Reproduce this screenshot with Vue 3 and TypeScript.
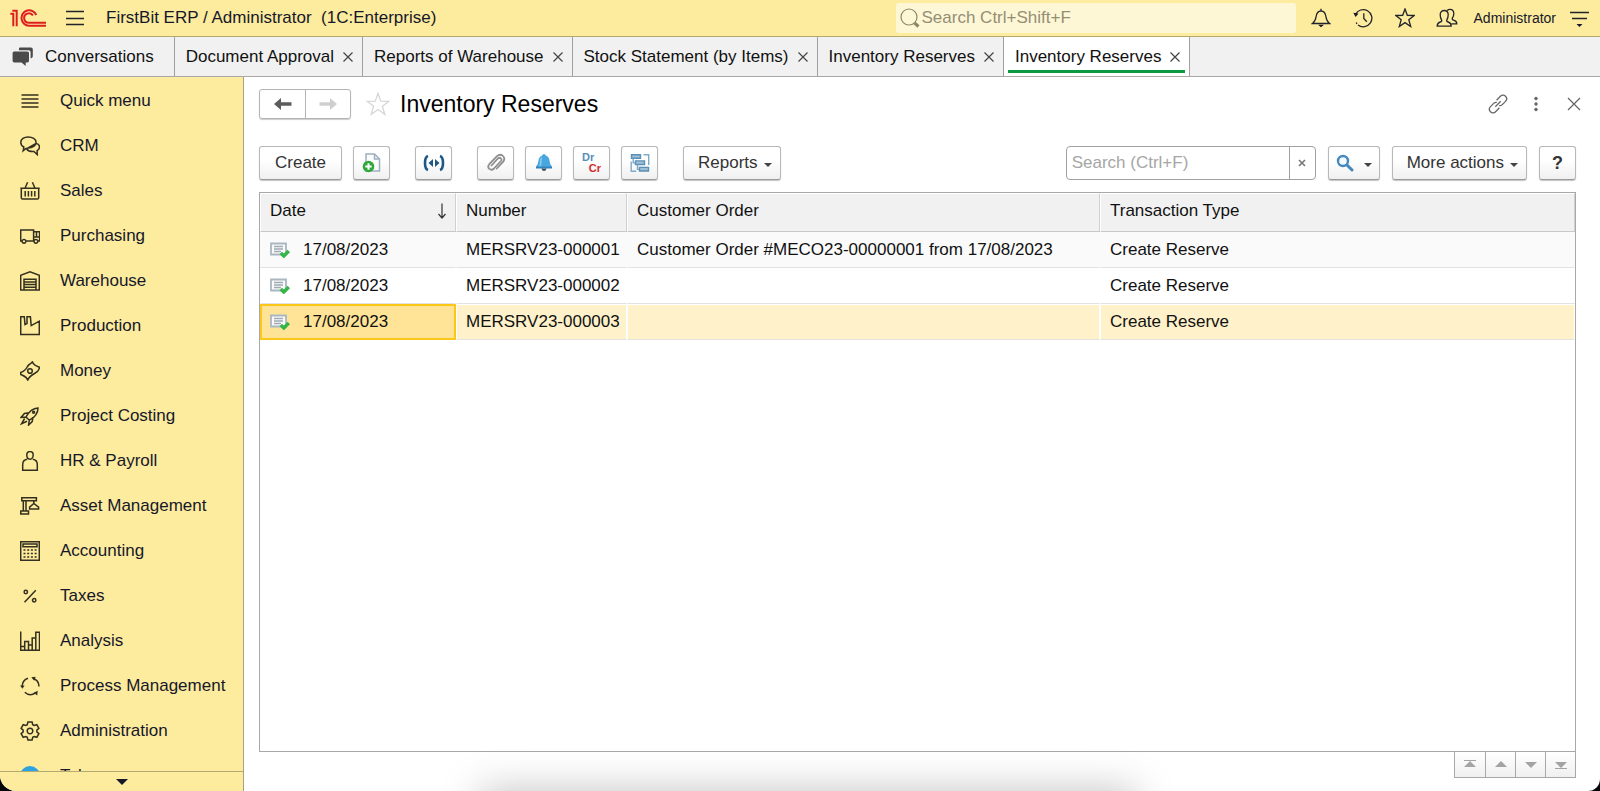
<script setup lang="ts">
import { ref } from 'vue'

interface Section {
  label: string
  stroke: string
  fill?: string
  badge?: boolean
}

interface Reserve {
  date: string
  number: string
  order: string
  type: string
}

const circle = (x: number, y: number, r: number): string =>
  `M${x - r} ${y}a${r} ${r} 0 1 0 ${2 * r} 0a${r} ${r} 0 1 0 ${-2 * r} 0z`

const polar = (r: number, deg: number): string => {
  const a = (deg * Math.PI) / 180
  return `${(10 + r * Math.cos(a)).toFixed(2)} ${(10 + r * Math.sin(a)).toFixed(2)}`
}

const gear = (): string => {
  const points: string[] = []
  for (let k = 0; k < 6; k++) {
    const a = 60 * k - 90
    points.push(polar(6.9, a - 23), polar(9.3, a - 13), polar(9.3, a + 13), polar(6.9, a + 23))
  }
  return `M${points.join('L')}z`
}

const sections: Section[] = [
  { label: 'Quick menu', stroke: 'M1.5 4h17M1.5 8h17M1.5 12h17M1.5 16h17' },
  {
    label: 'CRM',
    stroke:
      'M3.2 14.600l.6-3.600C1.600 9.800.8 8.200.8 6.400.8 3.200 4 .9 8.200.9s7.900 2.400 7.900 5.500-3.600 5.700-7.900 5.700c-1.800.2-3.400 1-5 2.500zM16.200 7.400c2.200.6 3.300 1.900 3.300 3.500 0 1.500-.9 2.900-2.400 3.700l.2 4-3.400-3.100c-3.200.3-6-.8-7.400-2.800M16.100 7.400l-8 4.600',
  },
  {
    label: 'Sales',
    stroke:
      'M.3 7.300h19.400M1.300 7.300v9.400q0 1.300 1.300 1.300h14.800q1.300 0 1.300-1.300V7.300M5 7.300L7.600 1.300M15 7.300L12.400 1.300M5.200 10v5.600M8.400 10v5.600M11.600 10v5.600M14.800 10v5.600',
  },
  {
    label: 'Purchasing',
    stroke: 'M2 15H.7V4h12.900v11H6M13.600 5.800h6V15h-1.600M13.600 11h6M16.500 6v5' + circle(4, 15.3, 1.9) + circle(15.9, 15.3, 1.9),
  },
  {
    label: 'Warehouse',
    stroke: 'M.7 19V4.200L10 .9l9.300 3.300V19zM4 19V8.200h12V19M4 10.900h12M4 13.600h12M4 16.300h12',
  },
  { label: 'Production', stroke: 'M.7 18.500V.8h3.600l.7 7.800 2-1V.8h3.400l.8 8.800 8.100-4.400v13.300z' },
  {
    label: 'Money',
    stroke:
      'M.6 11.500C4 10.500 6 8.500 7.500 5.500 9 3 11 3 12.300.8 13.500 4 16.500 5.400 19.400 6.200 19.600 9 17 11 14.500 12.500 11 14.500 9 16 7.800 19 6.500 15.500 3.800 15 .8 13.500z' +
      circle(10, 10, 2.3),
  },
  {
    label: 'Project Costing',
    stroke:
      'M18 2C13 2.300 9.500 4.500 6 11l3.300 3.200C15.500 11 18 7.500 18 2zM9 6.800l-4.600.6L1 11.500 6 11M13 11.200l-.8 4.400L8.600 19l.7-4.800M4.600 12.500L1.500 17.800 7 15.200' +
      circle(13.6, 6.2, 1),
  },
  {
    label: 'HR & Payroll',
    stroke:
      'M10 .6c2 0 3.200 1.500 3.200 3.500S12 8.200 10 8.200 6.800 6.200 6.800 4.100 8 .6 10 .6zM7.200 8.200C4.200 8.600 2.700 10.600 2.700 13.500v5.800h14.600v-5.800c0-2.900-1.500-4.900-4.500-5.300',
  },
  {
    label: 'Asset Management',
    stroke:
      'M.8 14.900h7.700v3.200H.8zM3.300 14.900V5M6 14.900V5M1.800 1.800h14.600v3H1.800zM13.800 4.800V7.500M13.800 7.500l-4.200 3.700v1.800h9v-1.800z',
  },
  {
    label: 'Accounting',
    stroke:
      'M.7.7h18.600v18.600H.7zM3 3h14v2.800H3zM3.500 9h2M7.200 9h2M10.900 9h2M14.600 9h2M3.500 12.500h2M7.200 12.500h2M10.900 12.500h2M14.600 12.500h2M3.500 16h2M7.200 16h2M10.900 16h2M14.600 16h2',
  },
  { label: 'Taxes', stroke: 'M15.800 4.200L4.500 16.200' + circle(5.8, 6, 1.7) + circle(14.2, 14.200, 1.7) },
  {
    label: 'Analysis',
    stroke: 'M.7.4v18.900h18.800V1.300h-3.700v18M12.200 19V7h3.600M8.500 19v-5h3.700M4.700 19v-8.600h3.800V14M.7 15.500h4',
  },
  {
    label: 'Process Management',
    stroke: 'M2.200 10.500C2.300 6.500 4.400 3.400 8 2.300M13 2.300c3.700 1.300 5.900 4.300 6 8.200M15.500 16.800C12 19.300 8 19.200 4.800 16.200',
    fill: 'M0 9.500h4.600l-2.100 3.300zM11.300 1.300l4.300-.6-1.300 4zM17.800 14.800l-.6 4.700-3.500-2.700z',
  },
  { label: 'Administration', stroke: gear() + circle(10, 10, 2.8) },
  { label: 'Telegram', stroke: '', badge: true },
]

const tabs = [
  'Document Approval',
  'Reports of Warehouse',
  'Stock Statement (by Items)',
  'Inventory Reserves',
  'Inventory Reserves',
]
const activeTab = ref(4)

const rows: Reserve[] = [
  {
    date: '17/08/2023',
    number: 'MERSRV23-000001',
    order: 'Customer Order #MECO23-00000001 from 17/08/2023',
    type: 'Create Reserve',
  },
  { date: '17/08/2023', number: 'MERSRV23-000002', order: '', type: 'Create Reserve' },
  { date: '17/08/2023', number: 'MERSRV23-000003', order: '', type: 'Create Reserve' },
]
const selected = ref(2)

const pager = [
  { label: 'First', d: 'M1 0h12v1H1zM7 1l6 6H1z' },
  { label: 'Previous', d: 'M7 1l6 6H1z' },
  { label: 'Next', d: 'M1 2h12L7 8z' },
  { label: 'Last', d: 'M1 2h12L7 8zM1 8h12v1H1z' },
]

const globalSearch = ref('')
const listSearch = ref('')
</script>

<template>
  <div class="app">
    <header class="topbar">
      <svg class="logo" viewBox="0 0 36 18" aria-label="1C">
        <path d="M.3 4.800H3.300V17.300M2.300 1.700H6.700V17.300M26.300 6A7.700 7.700 0 1 0 19 16.700H36M22.900 6.600A4.700 4.700 0 1 0 19 13.700H36" />
      </svg>
      <button class="icon-btn burger" aria-label="Main menu">
        <svg width="18" height="16" viewBox="0 0 18 16"><path d="M0 1.500h18M0 8.500h18M0 14.500h18" /></svg>
      </button>
      <span class="app-title">FirstBit ERP / Administrator&nbsp; (1C:Enterprise)</span>
      <label class="global-search">
        <svg width="20" height="20" viewBox="0 0 20 20">
          <circle cx="9" cy="9" r="8" />
          <path class="handle" d="M14.500 15l4 3.500" />
        </svg>
        <input v-model="globalSearch" type="text" placeholder="Search Ctrl+Shift+F" aria-label="Global search" />
      </label>
      <div class="tools">
        <button class="icon-btn" aria-label="Notifications">
          <svg width="20" height="20" viewBox="0 0 20 20">
            <path d="M1.500 15.500h17c-2.500-2-3.200-3.800-3.600-7C14.400 5.200 13 3 10 3S5.600 5.200 5.100 8.500c-.4 3.200-1.100 5-3.600 7zM10 3V.8" />
            <path class="solid" d="M7 16.800h6L10 19.300z" />
          </svg>
        </button>
        <button class="icon-btn" aria-label="History">
          <svg width="20" height="20" viewBox="0 0 20 20">
            <path d="M2.500 6.500A8.600 8.600 0 1 1 5 17M3.200 14.500l.8 1.400M10.800 5.200v5.300l3 3.200" />
            <path class="solid" d="M.3 4.800l5.200.6-2.900 3.600z" />
          </svg>
        </button>
        <button class="icon-btn" aria-label="Favorites">
          <svg width="20" height="20" viewBox="0 0 20 20">
            <path d="M10 1l2.300 6.300 6.900.2-5.400 4.200 1.900 6.800L10 14.600l-5.700 3.900 1.900-6.800L.8 7.500l6.900-.2z" />
          </svg>
        </button>
        <button class="icon-btn" aria-label="Users">
          <svg width="22" height="20" viewBox="0 0 22 20">
            <path d="M1.200 18.200c0-2.400.8-3.600 3-4.200 1.500-.4 1.900-1 1.300-2.200C4.600 10.300 4.200 8.600 4.200 6.800c0-2.600 1.500-4.300 4-4.300s4 1.700 4 4.300c0 1.800-.4 3.500-1.300 5-.6 1.200-.2 1.800 1.300 2.200 2.200.6 3 1.800 3 4.200z" />
            <path d="M11.200 2.500c.7-.8 1.600-1.200 2.800-1.200 2.500 0 3.800 1.700 3.800 4.200 0 1.700-.5 3.200-1.300 4.400-.6 1.200-.2 1.800 1.200 2.300 2.200.7 3.100 1.800 3.100 3.600h-5.500" />
          </svg>
        </button>
      </div>
      <span class="user">Administrator</span>
      <button class="icon-btn service" aria-label="Service menu">
        <svg width="20" height="20" viewBox="0 0 20 20">
          <path d="M0 4.500h19M2 10.500h15" />
          <path class="solid" d="M6.500 16h6L9.500 19z" />
        </svg>
      </button>
    </header>

    <nav class="tabs" aria-label="Open windows">
      <button class="tab home">
        <svg width="22" height="20" viewBox="0 0 22 20">
          <path d="M7 3.200V1.200Q7 .5 8 .5h11q1.800 0 1.800 1.700v7q0 1.700-1.600 2l-.6.100v-6q0-2-2-2.100z" />
          <path d="M2.200 4.500h13.200q1.600 0 1.600 1.600v7.700q0 1.600-1.600 1.600h-1.700v3.500L9.500 15.400H2.200q-1.600 0-1.600-1.600V6.100q0-1.600 1.600-1.600z" />
        </svg>
        Conversations
      </button>
      <div v-for="(t, i) in tabs" :key="i" class="tab" :class="{ active: i === activeTab }">
        <button class="tab-label" @click="activeTab = i">{{ t }}</button>
        <button class="tab-close" aria-label="Close tab">
          <svg width="10" height="10" viewBox="0 0 10 10"><path d="M.5.500l9 9M9.500.500l-9 9" /></svg>
        </button>
      </div>
    </nav>

    <div class="body">
      <aside class="sidebar">
        <nav class="sections" aria-label="Sections">
          <a v-for="s in sections" :key="s.label" href="#" class="section">
            <svg width="20" height="20" viewBox="0 0 20 20">
              <circle v-if="s.badge" class="badge" cx="10" cy="10" r="10" />
              <path v-else :d="s.stroke" />
              <path v-if="s.fill" class="solid" :d="s.fill" />
            </svg>
            {{ s.label }}
          </a>
        </nav>
        <button class="more" aria-label="Scroll sections">
          <svg width="12" height="6" viewBox="0 0 12 6"><path d="M0 0h12L6 6z" /></svg>
        </button>
      </aside>

      <main class="main">
        <div class="title-row">
          <div class="history">
            <button aria-label="Back">
              <svg width="18" height="12" viewBox="0 0 18 12"><path d="M0 6l7-6v4.200h10.500v3.600H7V12z" /></svg>
            </button>
            <button class="off" aria-label="Forward" disabled>
              <svg width="18" height="12" viewBox="0 0 18 12"><path d="M18 6l-7-6v4.200H.5v3.600H11V12z" /></svg>
            </button>
          </div>
          <button class="icon-btn fav" aria-label="Add to favorites">
            <svg width="24" height="24" viewBox="0 0 24 24">
              <path d="M12 1.200l2.700 7.900 8.300.2-6.600 5 2.400 8L12 17.500l-6.800 4.800 2.400-8L1 9.300l8.300-.2z" />
            </svg>
          </button>
          <h1>Inventory Reserves</h1>
          <div class="window-tools">
            <button class="icon-btn" aria-label="Get link">
              <svg width="20" height="20" viewBox="0 0 20 20">
                <path d="M8.600 6.200l3.800-3.900c1.500-1.500 3.700-1.500 5.100-.1s1.400 3.700 0 5.200l-3.200 3.200c-.9.900-2 1.200-3.100 1M11.400 13.800l-3.800 3.900c-1.500 1.500-3.700 1.500-5.100.1s-1.400-3.700 0-5.200l3.200-3.200c.9-.9 2-1.200 3.100-1M7.300 12.700l5.400-5.400" />
              </svg>
            </button>
            <button class="icon-btn" aria-label="Window options">
              <svg width="20" height="20" viewBox="0 0 20 20">
                <circle class="dot" cx="10" cy="4.500" r="1.700" />
                <circle class="dot" cx="10" cy="10" r="1.700" />
                <circle class="dot" cx="10" cy="15.500" r="1.700" />
              </svg>
            </button>
            <button class="icon-btn" aria-label="Close">
              <svg width="14" height="14" viewBox="0 0 14 14"><path d="M1 1l12 12M13 1L1 13" /></svg>
            </button>
          </div>
        </div>

        <div class="toolbar">
          <button class="btn create">Create</button>
          <button class="btn square" aria-label="Create by copying">
            <svg width="20" height="20" viewBox="0 0 20 20">
              <path d="M4 1h8.500L17.500 6v12H4z" fill="#fbfcfd" stroke="#9fb0bf" stroke-width="1.500" />
              <path d="M12.500 1v5h5" fill="none" stroke="#9fb0bf" stroke-width="1.500" />
              <circle cx="6.500" cy="13.500" r="5.800" fill="#2fa83a" />
              <path d="M6.500 10.300v6.400M3.300 13.500h6.400" stroke="#fff" stroke-width="2" />
            </svg>
          </button>
          <button class="btn square apart" aria-label="Set date interval">
            <svg width="22" height="18" viewBox="0 0 22 18">
              <path d="M5 2Q2 3 2 9T5 16M17 2q3 1 3 7T17 16" fill="none" stroke="#1d5785" stroke-width="2.600" />
              <path d="M10 5v8L5.500 9zM12 5v8l4.500-4z" fill="#1d5785" />
            </svg>
          </button>
          <button class="btn square apart" aria-label="Attached files">
            <svg width="20" height="20" viewBox="0 0 20 20">
              <path d="M5.500 12.500l6.500-7q1.500-1.400 2.800-.2t.1 2.700L8 15.500q-2.300 2.300-4.600.4t-.1-4.700L11 3.200q3-2.700 5.800-.3t.4 5.700l-6.400 6.900" fill="none" stroke="#8f8f8f" stroke-width="1.800" stroke-linecap="round" />
            </svg>
          </button>
          <button class="btn square" aria-label="Reminders">
            <svg width="18" height="20" viewBox="0 0 18 20">
              <path d="M9 1q1.600 0 1.700 1.500 3.600 1 3.900 5.500.2 3.700 2.400 5.700v1.600H1v-1.600q2.200-2 2.400-5.700.3-4.500 3.900-5.500Q7.400 1 9 1z" fill="#49a7e0" />
              <path d="M7 3.500q-2 1.500-2 5t-1.500 5H6q1-5 1-10z" fill="#86c9f0" />
              <path d="M1 13.600h16v1.800H1z" fill="#3482b8" />
              <path d="M6.500 15.400h5q-.4 2.600-2.500 2.600t-2.500-2.600z" fill="#47515a" />
            </svg>
          </button>
          <button class="btn square drcr" aria-label="Accounting entries"><span class="dr">Dr</span><span class="cr">Cr</span></button>
          <button class="btn square" aria-label="Related documents">
            <svg width="20" height="20" viewBox="0 0 20 20">
              <g fill="#9fc0d8" stroke="#5a8fb6" stroke-width="1.400">
                <path d="M1.500 1.700h9v3.600h-9zM5.500 7.900h9v3.600h-9zM9.500 14.400h9v3.600h-9z" />
              </g>
              <path d="M3.200 5.500v4.200h2.300M7.500 11.700v4.700H9M13.500 1.700h5.200V12M1.200 8.500v9.700h5" fill="none" stroke="#7fa9c8" stroke-width="1.400" />
            </svg>
          </button>
          <button class="btn menu apart">Reports<i class="caret"></i></button>

          <div class="right">
            <div class="list-search">
              <input v-model="listSearch" type="text" placeholder="Search (Ctrl+F)" aria-label="Search in list" />
              <button aria-label="Clear search" @click="listSearch = ''">
                <svg width="8" height="8" viewBox="0 0 8 8"><path d="M1 1l6 6M7 1L1 7" /></svg>
              </button>
            </div>
            <button class="btn find" aria-label="Find">
              <svg width="18" height="18" viewBox="0 0 18 18">
                <circle cx="7" cy="7" r="5" fill="#f4f9fd" stroke="#4688bd" stroke-width="2.400" />
                <path d="M11 11l5 5" stroke="#4688bd" stroke-width="3" stroke-linecap="round" />
              </svg>
              <i class="caret"></i>
            </button>
            <button class="btn menu">More actions<i class="caret"></i></button>
            <button class="btn square help">?</button>
          </div>
        </div>

        <div class="grid">
          <table>
            <colgroup>
              <col class="c-date" />
              <col class="c-number" />
              <col class="c-order" />
              <col />
            </colgroup>
            <thead>
              <tr>
                <th scope="col">
                  <span class="sortable">
                    Date
                    <svg width="10" height="16" viewBox="0 0 10 16"><path d="M5 .500v14M1.500 11L5 15l3.500-4" /></svg>
                  </span>
                </th>
                <th scope="col">Number</th>
                <th scope="col">Customer Order</th>
                <th scope="col">Transaction Type</th>
              </tr>
            </thead>
            <tbody>
              <tr v-for="(r, i) in rows" :key="r.number" :class="{ selected: i === selected }" @click="selected = i">
                <td>
                  <span class="date">
                    <svg width="20" height="16" viewBox="0 0 20 16">
                      <path d="M1 1.500h15v11H1z" fill="#f8fafb" stroke="#a9b7c2" stroke-width="1.800" />
                      <path d="M4 4.500h9M4 7h9M4 9.500h7" stroke="#a0abb4" stroke-width="1.300" />
                      <path d="M10.800 11l3 3L18.800 9" fill="none" stroke="#36b548" stroke-width="3.400" />
                    </svg>
                    {{ r.date }}
                  </span>
                </td>
                <td>{{ r.number }}</td>
                <td>{{ r.order }}</td>
                <td>{{ r.type }}</td>
              </tr>
            </tbody>
          </table>
        </div>

        <div class="pager">
          <button v-for="p in pager" :key="p.label" :aria-label="p.label">
            <svg width="14" height="10" viewBox="0 0 14 10"><path :d="p.d" /></svg>
          </button>
        </div>
      </main>
    </div>
  </div>
</template>

<style>
body {
  margin: 0;
  background: #05060a;
}
</style>

<style scoped>
.app {
  position: relative;
  display: flex;
  flex-direction: column;
  height: 100vh;
  overflow: hidden;
  border-radius: 0 0 12px 16px;
  background: #fff;
  color: #111;
  font-family: 'Liberation Sans', Arial, sans-serif;
  font-size: 17px;
  line-height: 20px;
}

/* soft shadow rising from the lower window edge */
.app::after {
  content: '';
  position: absolute;
  top: 100%;
  left: 30%;
  right: 29%;
  height: 40px;
  box-shadow: 0 0 40px rgba(0, 0, 0, 0.25);
  pointer-events: none;
}

button,
input {
  margin: 0;
  padding: 0;
  border: 0;
  background: none;
  color: inherit;
  font: inherit;
}

svg {
  display: block;
  flex: none;
}

.icon-btn {
  display: flex;
  align-items: center;
  justify-content: center;
}

.icon-btn svg {
  fill: none;
  stroke: #22242c;
  stroke-width: 1.3;
}

.icon-btn .solid {
  fill: #16182a;
  stroke: none;
}

/* top bar */
.topbar {
  display: flex;
  align-items: center;
  box-sizing: border-box;
  height: 37px;
  padding: 0 10px;
  border-bottom: 1px solid #b5a96f;
  background: #fdeb9e;
  color: #16182a;
}

.logo {
  width: 36px;
  height: 18px;
  fill: none;
  stroke: #de1f1f;
  stroke-width: 2;
}

.burger {
  margin: 0 22px 0 20px;
}

.global-search {
  display: flex;
  align-items: center;
  gap: 2px;
  box-sizing: border-box;
  width: 25vw;
  height: 30px;
  margin-left: auto;
  padding-left: 4px;
  border-radius: 3px;
  background: #fef7d6;
}

.global-search svg {
  fill: none;
  stroke: #8d876a;
  stroke-width: 1.2;
}

.global-search .handle {
  stroke-width: 3;
}

.global-search input {
  flex: 1;
  min-width: 0;
  outline: none;
}

.global-search input::placeholder {
  color: #948e75;
  opacity: 1;
}

.tools {
  display: flex;
  margin-left: 4px;
}

.tools .icon-btn {
  width: 42px;
  height: 30px;
}

.user {
  margin-left: 6px;
  font-size: 14px;
}

.service {
  margin-left: 14px;
}

/* tabs */
.tabs {
  display: flex;
  box-sizing: border-box;
  height: 40px;
  border-bottom: 1px solid #a8a8a8;
  background: #f1f1f1;
}

.tab {
  display: flex;
  align-items: center;
  gap: 6px;
  padding: 0 6px 0 11px;
  border-right: 1px solid #a0a0a0;
  white-space: nowrap;
}

.home {
  gap: 11px;
  padding: 0 20px 0 12px;
}

.home svg {
  fill: #4a4a4a;
}

.tab-close {
  padding: 3px;
}

.tab-close svg,
.list-search svg {
  stroke: #444;
  stroke-width: 1.2;
}

.tab.active {
  background: linear-gradient(#0a9b41, #0a9b41) center bottom 3px / calc(100% - 8px) 3px no-repeat #fff;
}

/* sidebar */
.body {
  display: flex;
  flex: 1;
  min-height: 0;
}

.sidebar {
  display: flex;
  flex: none;
  flex-direction: column;
  box-sizing: border-box;
  width: 244px;
  border-right: 1px solid #a9a280;
  background: #fdeb9e;
}

.sections {
  flex: 1;
  min-height: 0;
  padding-top: 1px;
  overflow: hidden;
}

.section {
  display: flex;
  align-items: center;
  gap: 20px;
  height: 45px;
  padding-left: 20px;
  color: #16182a;
  text-decoration: none;
  white-space: nowrap;
}

.section svg {
  fill: none;
  stroke: #33301f;
  stroke-width: 1.5;
}

.section .solid {
  fill: #33301f;
  stroke: none;
}

.section .badge {
  fill: #2ba3e0;
  stroke: none;
}

.more {
  display: flex;
  align-items: center;
  justify-content: center;
  height: 20px;
  border-top: 1px solid #b5a96f;
}

.more svg {
  fill: #16182a;
}

/* form area */
.main {
  display: flex;
  flex: 1;
  flex-direction: column;
  min-width: 0;
  padding: 12px 24px 13px 15px;
}

.title-row {
  display: flex;
  align-items: center;
  height: 30px;
}

.history {
  display: flex;
  box-sizing: border-box;
  height: 30px;
  border: 1px solid #b4b4b4;
  border-radius: 3px;
  box-shadow: 0 1px 1px #ccc;
}

.history button {
  display: flex;
  align-items: center;
  justify-content: center;
  width: 45px;
}

.history svg {
  fill: #5c5c5c;
}

.history .off {
  border-left: 1px solid #b4b4b4;
}

.history .off svg {
  fill: #cfcfcf;
}

.fav {
  margin: 0 10px 0 15px;
}

.fav svg {
  stroke: #d6d6d6;
}

h1 {
  margin: 0;
  color: #000;
  font-size: 23px;
  font-weight: 400;
  line-height: 28px;
}

.window-tools {
  display: flex;
  gap: 18px;
  margin: 0 -8px 0 auto;
}

.window-tools .icon-btn {
  width: 20px;
}

.window-tools svg {
  stroke: #666;
}

.window-tools .dot {
  fill: #666;
  stroke: none;
}

.toolbar {
  display: flex;
  align-items: center;
  gap: 11px;
  margin: 27px 0 12px;
}

.btn {
  display: flex;
  align-items: center;
  justify-content: center;
  box-sizing: border-box;
  height: 34px;
  border: 1px solid #b8b8b8;
  border-bottom-color: #9a9a9a;
  border-radius: 3px;
  background: linear-gradient(#fff 40%, #f0f0f0);
  box-shadow: 0 1px 1px #c4c4c4;
  color: #333;
  white-space: nowrap;
}

.create {
  padding: 0 15px;
}

.square {
  width: 37px;
}

.apart {
  margin-left: 14px;
}

.menu {
  gap: 6px;
  padding: 0 8px 0 14px;
}

.caret {
  width: 0;
  margin-top: 3px;
  border: 4px solid transparent;
  border-top-color: #444;
  border-bottom: 0;
}

.drcr {
  display: grid;
  grid-template-columns: 1fr;
  align-content: center;
  padding: 0 8px;
  font-size: 11px;
  font-weight: 700;
  line-height: 11px;
}

.dr {
  justify-self: start;
  color: #5590b8;
}

.cr {
  justify-self: end;
  color: #d42a2a;
}

.right {
  display: flex;
  gap: 12px;
  margin-left: auto;
}

.list-search {
  display: flex;
  box-sizing: border-box;
  width: 250px;
  height: 34px;
  border: 1px solid #a0a0a0;
  border-radius: 4px;
}

.list-search input {
  flex: 1;
  min-width: 0;
  padding-left: 5px;
  outline: none;
}

.list-search input::placeholder {
  color: #a6a6a6;
  opacity: 1;
}

.list-search button {
  display: flex;
  align-items: center;
  justify-content: center;
  width: 26px;
  border-left: 1px solid #a0a0a0;
}

.list-search svg {
  stroke: #777;
  stroke-width: 1.6;
}

.find {
  gap: 10px;
  width: 52px;
}

.help {
  font-size: 18px;
  font-weight: 700;
}

/* list */
.grid {
  flex: 1;
  min-height: 0;
  overflow: hidden;
  border: 1px solid #a8a8a8;
  background: #fff;
}

table {
  width: 100%;
  border-spacing: 0;
  table-layout: fixed;
}

.c-date {
  width: 196px;
}

.c-number {
  width: 171px;
}

.c-order {
  width: 473px;
}

th,
td {
  box-sizing: border-box;
  overflow: hidden;
  padding: 0 0 0 9px;
  text-align: left;
  font-weight: 400;
  white-space: nowrap;
}

th {
  height: 39px;
  padding-bottom: 3px;
  border: 1px solid #fff;
  border-right-color: #d0d0d0;
  border-bottom-color: #c8c8c8;
  background: #f1f1f1;
}

td {
  height: 36px;
  border: 1px solid transparent;
  border-bottom-color: #e2e2e2;
}

tbody tr:first-child {
  background: #fafafa;
}

.sortable,
.date {
  display: flex;
  align-items: center;
}

.sortable {
  justify-content: space-between;
  padding-right: 8px;
}

.sortable svg {
  fill: none;
  stroke: #333;
  stroke-width: 1.2;
}

.date {
  gap: 13px;
}

.selected td {
  border-color: #fff;
  border-bottom-color: #e2e2e2;
  background: #fff1c9;
}

.selected td:first-child {
  padding-left: 8px;
  border: 2px solid #fcc719;
  background: #ffe497;
}

/* list paging */
.pager {
  display: flex;
  align-self: flex-end;
  border: solid #a8a8a8;
  border-width: 0 1px 1px;
}

.pager button {
  display: flex;
  align-items: center;
  justify-content: center;
  width: 30px;
  height: 25px;
  background: linear-gradient(#fff, #f0f0f0);
}

.pager button + button {
  border-left: 1px solid #a8a8a8;
}

.pager svg {
  fill: #a3a3a3;
}
</style>
